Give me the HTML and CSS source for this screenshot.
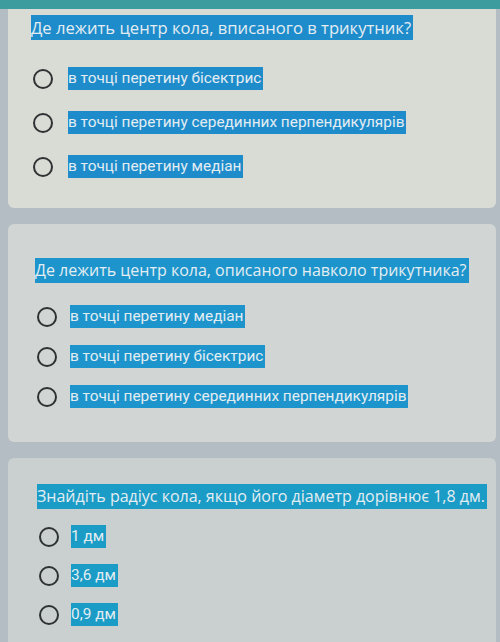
FILE: index.html
```html
<!DOCTYPE html>
<html lang="uk">
<head>
<meta charset="utf-8">
<title>Тест</title>
<link rel="stylesheet" href="styles.css">
</head>
<body>
<div class="topbar"></div>
<div class="page">
  <section class="card card1">
    <div class="question"><span class="sel">Де лежить центр кола, вписаного в трикутник?</span></div>
    <div class="options">
      <div class="option"><span class="radio"></span><span class="sel opt">в точці перетину бісектрис</span></div>
      <div class="option"><span class="radio"></span><span class="sel opt">в точці перетину серединних перпендикулярів</span></div>
      <div class="option"><span class="radio"></span><span class="sel opt">в точці перетину медіан</span></div>
    </div>
  </section>
  <section class="card card2">
    <div class="question"><span class="sel">Де лежить центр кола, описаного навколо трикутника?</span></div>
    <div class="options">
      <div class="option"><span class="radio"></span><span class="sel opt">в точці перетину медіан</span></div>
      <div class="option"><span class="radio"></span><span class="sel opt">в точці перетину бісектрис</span></div>
      <div class="option"><span class="radio"></span><span class="sel opt">в точці перетину серединних перпендикулярів</span></div>
    </div>
  </section>
  <section class="card card3">
    <div class="question"><span class="sel">Знайдіть радіус кола, якщо його діаметр дорівнює 1,8 дм.</span></div>
    <div class="options">
      <div class="option"><span class="radio"></span><span class="sel opt">1 дм</span></div>
      <div class="option"><span class="radio"></span><span class="sel opt">3,6 дм</span></div>
      <div class="option"><span class="radio"></span><span class="sel opt">0,9 дм</span></div>
    </div>
  </section>
</div>
</body>
</html>
```

FILE: styles.css
```css
html, body {
  margin: 0;
  padding: 0;
}
body {
  background: #b3bdc3;
  font-family: Roboto, "Noto Sans", sans-serif;
  width: 500px;
  height: 642px;
  overflow: hidden;
}
.topbar {
  height: 9px;
  background: #3c9c9e;
}
.page {
  display: flex;
  flex-direction: column;
  gap: 16px;
  padding: 0 4px 0 8px;
}
.card {
  background: #d9dbd5;
  display: flex;
  flex-direction: column;
  box-sizing: border-box;
}
.card1 {
  height: 199px;
  padding: 6px 0 0 23px;
  border-radius: 0 0 6px 6px;
}
.card2 {
  height: 218px;
  padding: 34px 0 0 27px;
  background: #d1d6d4;
  border-radius: 6px;
}
.card3 {
  height: 200px;
  padding: 26px 0 0 29px;
  background: #cad0d0;
  border-radius: 6px;
}
.sel {
  background: #1e8ccb;
  color: #e4edf2;
}
.card2 .sel {
  background: #1d95cc;
}
.card3 .sel {
  background: #1b9cc6;
}
.question {
  font-family: "Open Sans", sans-serif;
  font-size: 16px;
  line-height: 25px;
  height: 25px;
  white-space: nowrap;
}
.card1 .question {
  font-size: 16.6px;
}
.question .sel {
  display: inline-block;
  padding: 0 2px 0 0;
}
.options {
  display: flex;
  flex-direction: column;
}
.card1 .options {
  gap: 21px;
  margin-top: 27px;
}
.card2 .options {
  gap: 17px;
  margin-top: 22px;
}
.card3 .options {
  gap: 16px;
  margin-top: 16px;
}
.option {
  display: flex;
  align-items: center;
  height: 23px;
}
.radio {
  width: 16px;
  height: 16px;
  border: 2px solid #2e3232;
  border-radius: 50%;
  flex: none;
  margin-left: 2px;
  margin-right: 15px;
}
.card2 .radio {
  margin-right: 13px;
}
.card3 .radio {
  margin-right: 12px;
}
.opt {
  font-size: 15.4px;
  line-height: 23px;
  height: 23px;
  display: inline-block;
  padding-right: 2px;
  white-space: nowrap;
}
```
